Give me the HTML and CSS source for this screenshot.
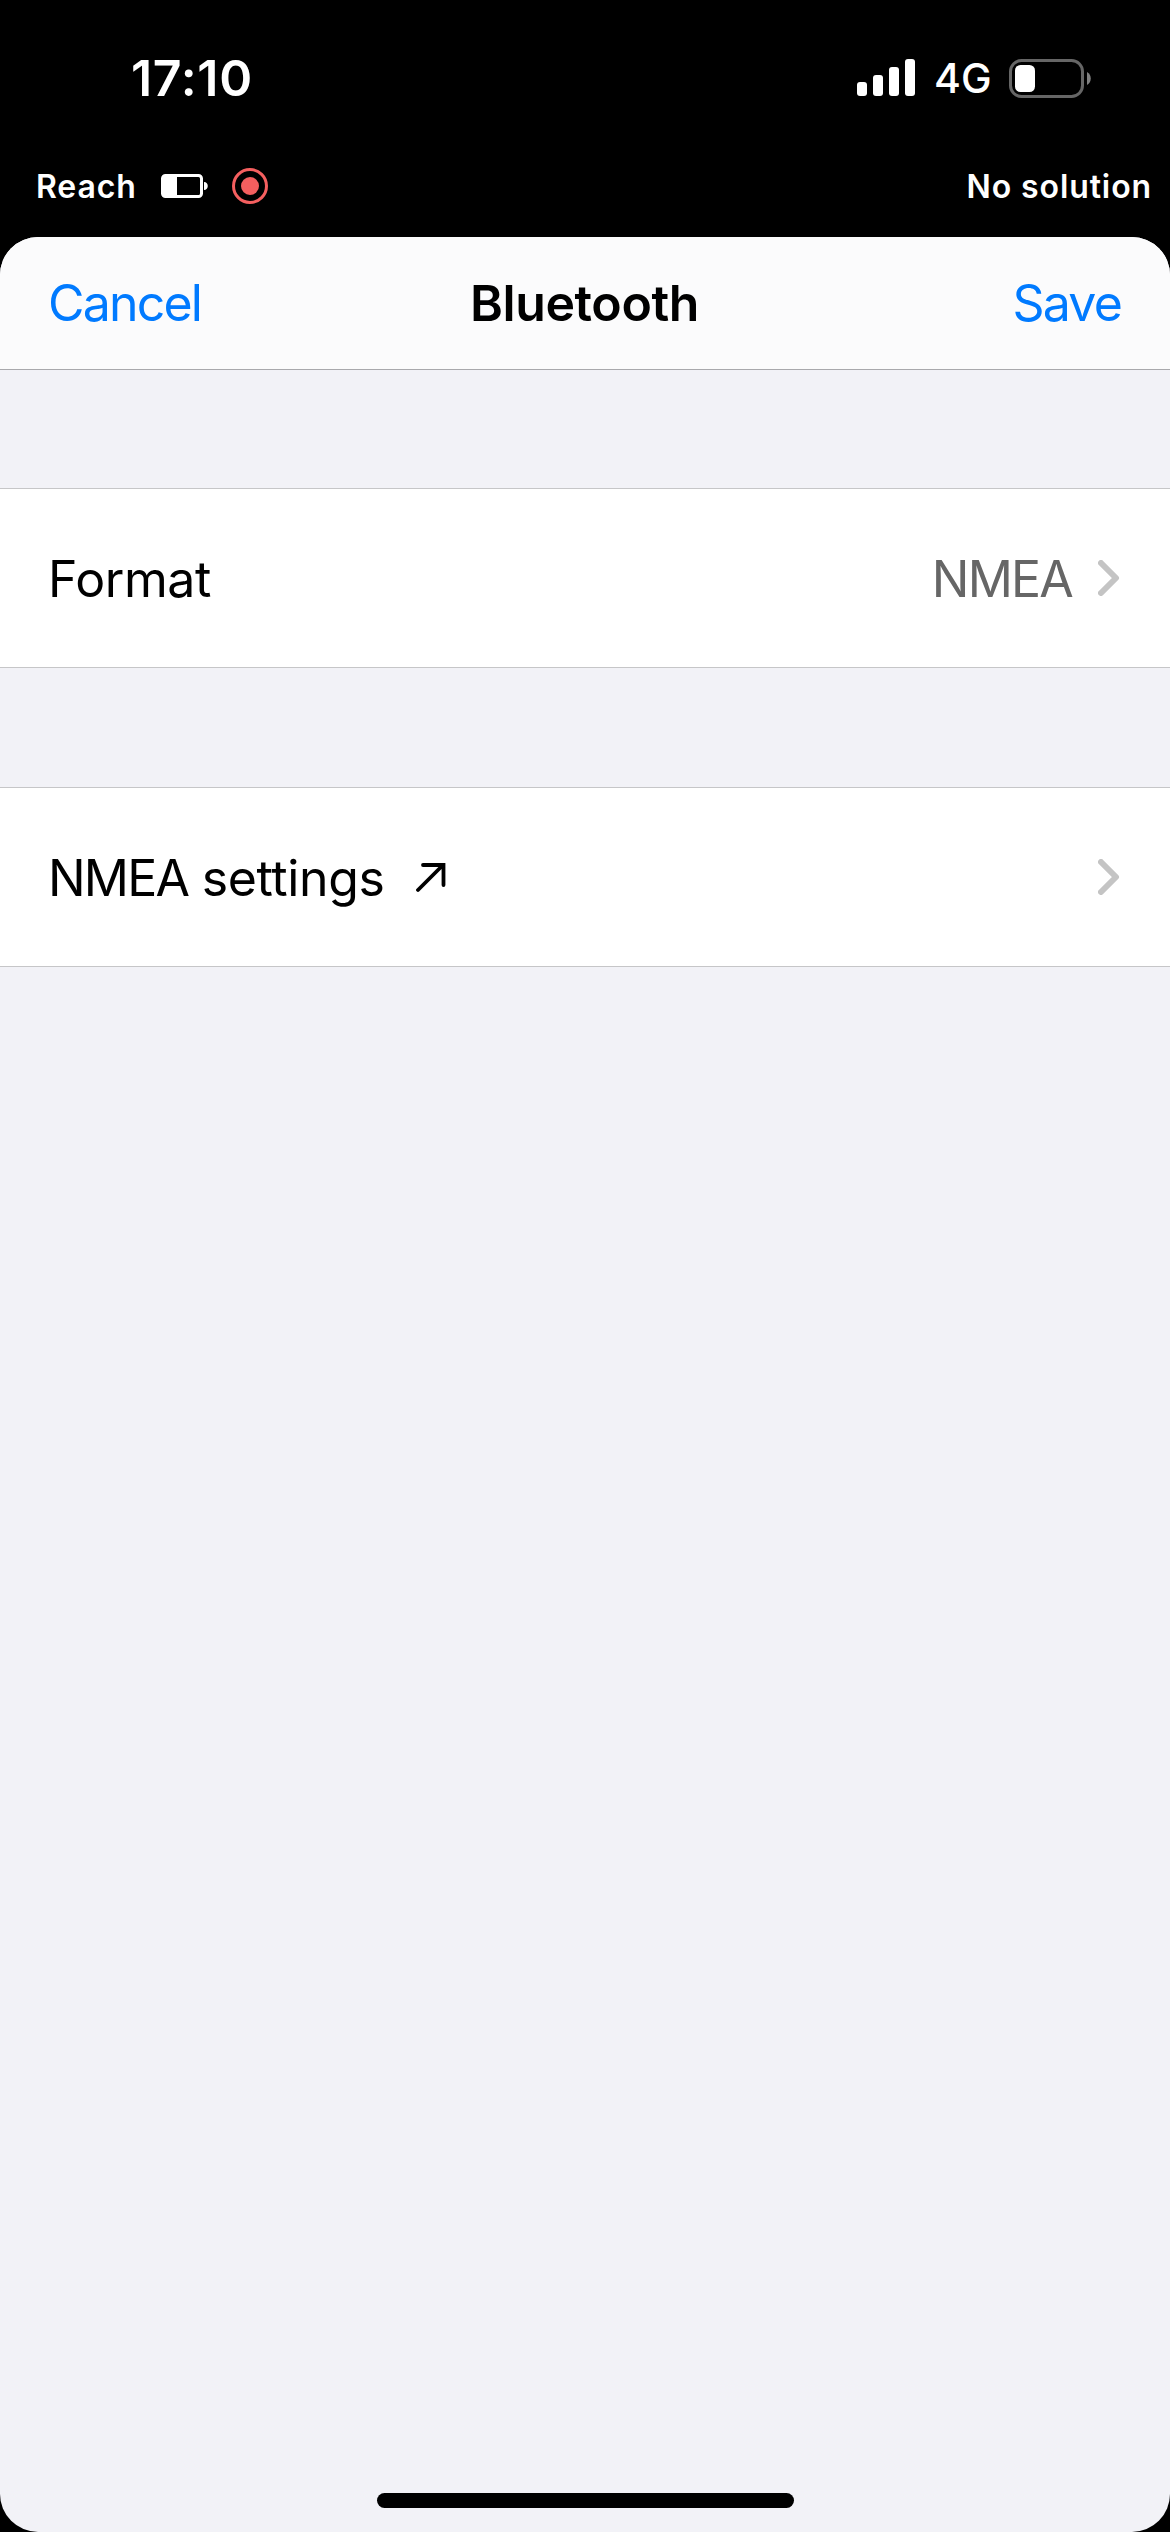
FILE: index.html
```
<!DOCTYPE html>
<html lang="en">
<head>
  <meta charset="UTF-8" />
  <title>Bluetooth</title>
  <link rel="stylesheet" href="styles.css">
</head>
<body>
  <div id="statusbar">
    <span class="time">17:10</span>
    <div class="status-icons">
      <svg class="signal" width="58" height="38" viewBox="0 0 58 38" fill="#fff">
        <rect x="0" y="23" width="10" height="14" rx="3" />
        <rect x="16" y="16" width="10" height="21" rx="3" />
        <rect x="32" y="8" width="10" height="29" rx="3" />
        <rect x="48" y="0" width="10" height="37" rx="3" />
      </svg>
      <span class="network">4G</span>
      <svg class="battery" width="82" height="39" viewBox="0 0 82 39">
        <rect x="1.5" y="1.5" width="72" height="36" rx="11" fill="none" stroke="#666" stroke-width="3" />
        <rect x="6" y="6" width="20" height="27" rx="5.5" fill="#fff" />
        <path d="M78 13c5 2.5 5 10.5 0 13z" fill="#808080" />
      </svg>
    </div>
  </div>

  <div id="devicebar">
    <span class="device">Reach</span>
    <svg class="device-battery" width="47" height="24" viewBox="0 0 47 24">
      <rect x="1.5" y="1.5" width="39" height="21" rx="3" fill="none" stroke="#fff" stroke-width="3" />
      <path d="M3 2h13v20H3z" fill="#fff" />
      <path d="M43 8c5 0 5 8 0 8z" fill="#fff" />
    </svg>
    <svg class="record" width="36" height="36" viewBox="0 0 36 36">
      <circle cx="18" cy="18" r="16.5" fill="none" stroke="#f55f5f" stroke-width="3" />
      <circle cx="18" cy="18" r="9" fill="#f55f5f" />
    </svg>
    <span class="solution">No solution</span>
  </div>

  <div id="sheet">
    <div id="header">
      <a class="cancel">Cancel</a>
      <h1>Bluetooth</h1>
      <a class="save">Save</a>
    </div>

    <div class="row">
      <span class="label">Format</span>
      <span class="value">NMEA</span>
      <svg class="chevron" width="22" height="36" viewBox="0 0 22 36">
        <path d="M3 3l15 15L3 33" fill="none" stroke="#c4c4c4" stroke-width="6" stroke-linecap="round" stroke-linejoin="round" />
      </svg>
    </div>

    <div class="row">
      <span class="label"><span class="caps">NMEA</span> settings</span>
      <svg class="arrow" width="30" height="30" viewBox="0 0 30 30">
        <path d="M2 27L27 2M7 2h20.5v20" fill="none" stroke="#000" stroke-width="3.8" stroke-linecap="round" />
      </svg>
      <svg class="chevron" width="22" height="36" viewBox="0 0 22 36">
        <path d="M3 3l15 15L3 33" fill="none" stroke="#c4c4c4" stroke-width="6" stroke-linecap="round" stroke-linejoin="round" />
      </svg>
    </div>

    <div id="home"></div>
  </div>
</body>
</html>
```
FILE: styles.css
```
html {
  background-color: #000;
}
body {
  margin: 0;
  height: 2532px;
  display: flex;
  flex-direction: column;
  overflow: hidden;
  font-family: Inter, "Liberation Sans", sans-serif;
  font-size: 50px;
  color: #000;
}
svg {
  display: block;
  flex-shrink: 0;
}
#statusbar {
  height: 156px;
  padding: 0 78px 0 131px;
  display: flex;
  align-items: center;
  justify-content: space-between;
  color: #fff;
}
.time {
  font-weight: 600;
  letter-spacing: 0.7px;
}
.status-icons {
  display: flex;
  align-items: center;
}
.network {
  width: 58px;
  margin: 0 17px 0 19px;
  font-size: 41px;
  font-weight: 500;
  line-height: 50px;
}
.battery {
  margin-right: 1px;
}
#devicebar {
  height: 60px;
  margin-bottom: 21px;
  padding: 0 18px 0 36px;
  display: flex;
  align-items: center;
  font-size: 32px;
  font-weight: 600;
  letter-spacing: 0.9px;
  color: #fff;
}
.device {
  width: 125px;
}
.record {
  margin-left: 24px;
}
.solution {
  margin-left: auto;
}
#sheet {
  flex: 1;
  display: flex;
  flex-direction: column;
  background-color: #f2f2f7;
  border-radius: 38px;
  overflow: hidden;
}
#header {
  height: 132px;
  padding: 0 49px 0 48px;
  display: grid;
  grid-template-columns: 1fr auto 1fr;
  align-items: center;
  background-color: #fbfbfc;
  border-bottom: 1px solid #a8a8ac;
}
h1 {
  margin: 0;
  font-size: 50px;
  font-weight: 600;
  letter-spacing: -0.4px;
}
.cancel, .save {
  color: #007aff;
  letter-spacing: -1.8px;
}
.save {
  text-align: right;
}
.row {
  height: 178px;
  margin-top: 118px;
  padding: 0 50px 0 48px;
  display: flex;
  align-items: center;
  background-color: #fff;
  border-top: 1px solid #c6c6c8;
  border-bottom: 1px solid #c6c6c8;
}
.row + .row {
  margin-top: 119px;
}
.label, .value {
  padding-top: 2px;
}
.label {
  letter-spacing: -0.4px;
}
.caps, .value {
  letter-spacing: -1.8px;
}
.value {
  margin-left: auto;
  color: #666;
}
.chevron {
  margin-left: 26px;
}
.arrow {
  margin: 2px 0 0 32px;
}
.arrow + .chevron {
  margin-left: auto;
}
#home {
  width: 417px;
  height: 15px;
  margin: auto auto 24px;
  border-radius: 8px;
  background-color: #000;
}
```
